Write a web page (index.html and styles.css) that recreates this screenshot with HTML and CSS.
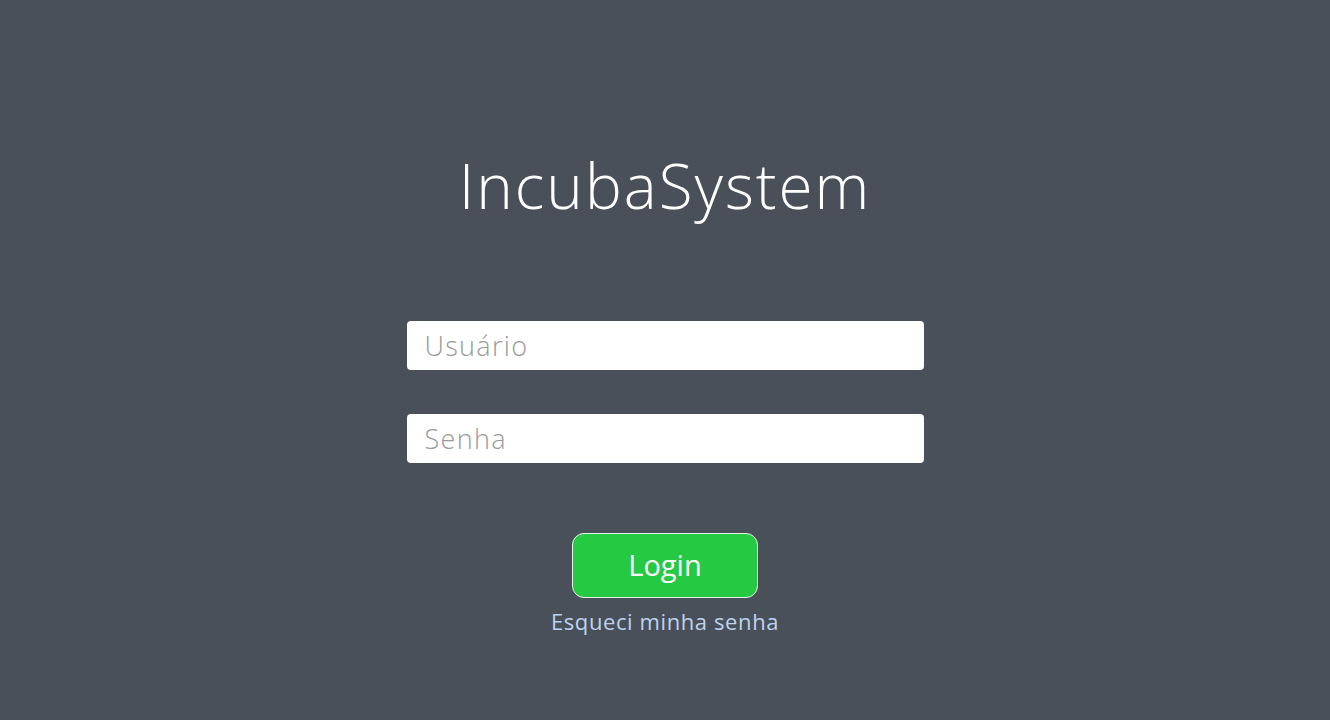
FILE: index.html
```html
<!DOCTYPE html>
<html lang="pt-BR">
<head>
<meta charset="utf-8">
<title>IncubaSystem</title>
<link rel="stylesheet" href="styles.css">
</head>
<body>
<main class="page">
  <h1 class="title">IncubaSystem</h1>
  <form class="login-form">
    <input class="field" type="text" placeholder="Usuário">
    <input class="field" type="password" placeholder="Senha">
    <button class="btn-login" type="button">Login</button>
    <a class="forgot" href="#">Esqueci minha senha</a>
  </form>
</main>
</body>
</html>
```

FILE: styles.css
```css
html, body {
  margin: 0;
  padding: 0;
  height: 100%;
}
body {
  background: #4a5059;
  font-family: "Open Sans", "Liberation Sans", sans-serif;
}
.page {
  display: flex;
  flex-direction: column;
  align-items: center;
  padding-top: 145px;
}
.title {
  margin: 0;
  color: #ffffff;
  font-weight: 300;
  font-size: 62px;
  line-height: 80px;
  letter-spacing: 2px;
}
.login-form {
  display: flex;
  flex-direction: column;
  align-items: center;
  margin-top: 96px;
}
.field {
  box-sizing: border-box;
  width: 517px;
  height: 49px;
  border: none;
  border-radius: 4px;
  background: #ffffff;
  padding: 0 18px;
  font-family: inherit;
  font-weight: 300;
  font-size: 27px;
  letter-spacing: 1.3px;
  color: #333;
  outline: none;
}
.field + .field {
  margin-top: 44px;
}
.field::placeholder {
  color: #9a9a9a;
}
.btn-login {
  box-sizing: border-box;
  margin-top: 70px;
  width: 186px;
  height: 65px;
  padding: 0 0 3px 0;
  border: 1px solid #e6f5e8;
  border-radius: 12px;
  background: #26c942;
  color: #ffffff;
  font-family: inherit;
  font-size: 29px;
  font-weight: 400;
  cursor: pointer;
}
.forgot {
  margin-top: 8px;
  color: #bcd3f0;
  font-size: 22px;
  letter-spacing: 0.6px;
  text-decoration: none;
  line-height: 30px;
}
```
